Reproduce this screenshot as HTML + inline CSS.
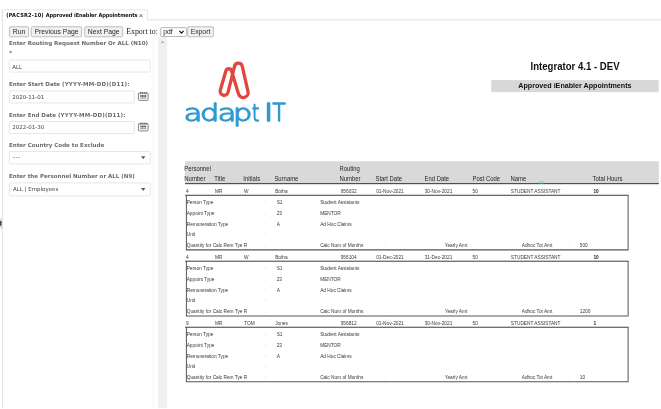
<!DOCTYPE html>
<html><head><meta charset="utf-8"><title>(PACSR2-10) Approved iEnabler Appointments</title>
<style>
html,body{margin:0;padding:0;background:#fff;overflow:hidden;}
body{width:661px;height:409px;position:relative;overflow:hidden;font-family:"Liberation Sans",sans-serif;}
#pg{position:absolute;left:0;top:0;width:661px;height:409px;will-change:transform;}
#pz{position:absolute;left:0;top:0;width:661px;height:409px;transform:translate(0.25px,0.25px) scale(1.0005);transform-origin:0 0;}
#bg{position:absolute;left:0;top:0;}
.t{position:absolute;white-space:nowrap;height:10px;line-height:10px;display:block;}
.r{position:absolute;display:block;}
</style></head><body><div id="pg"><div id="pz">
<svg id="bg" width="661" height="409" viewBox="0 0 661 409">
<g transform="translate(-0.25 -0.25)">
<rect x="2.0" y="9.5" width="0.70" height="398.50" fill="#dadada"/>
<path d="M2.35 21 V10.6 Q2.35 9.8 3.2 9.8 H146.5 Q147.3 9.8 147.3 10.6 V19.7" fill="none" stroke="#dedede" stroke-width="0.8" />
<rect x="147" y="18.9" width="514.00" height="1.70" fill="#ebebeb"/>
<rect x="0" y="218.2" width="2.20" height="10.20" fill="#d6dae3"/>
<rect x="-1" y="220.8" width="2.40" height="4.90" fill="#151515" rx="0.6"/>
<rect x="9.4" y="26.7" width="19.30" height="10.10" fill="#f0f0f0" stroke="#9a9a9a" stroke-width="0.6" rx="1.4"/>
<rect x="31.3" y="26.7" width="50.40" height="10.10" fill="#f0f0f0" stroke="#9a9a9a" stroke-width="0.6" rx="1.4"/>
<rect x="84.6" y="26.7" width="38.10" height="10.10" fill="#f0f0f0" stroke="#9a9a9a" stroke-width="0.6" rx="1.4"/>
<rect x="160.6" y="27.6" width="25.60" height="8.90" fill="#fff" stroke="#8a8a8a" stroke-width="0.6" rx="1.2"/>
<path d="M179.3 30.9 L181.4 33.1 L183.5 30.9" fill="none" stroke="#111" stroke-width="1.25" />
<rect x="187.5" y="26.7" width="25.80" height="10.10" fill="#f0f0f0" stroke="#9a9a9a" stroke-width="0.6" rx="1.4"/>
<rect x="153.4" y="37.5" width="0.70" height="370.50" fill="#f5f5f5"/>
<rect x="158.0" y="37.4" width="9.10" height="370.60" fill="#f0f0f0"/>
<path d="M160.9 42.9 L162.5 40.8 L164.1 42.9 Z" fill="#a6a6a6" stroke="none" stroke-width="0" />
<rect x="9.4" y="59.9" width="140.70" height="12.10" fill="#fff" stroke="#e0e0e0" stroke-width="0.8" rx="0.8"/>
<rect x="9.4" y="90.9" width="124.80" height="12.00" fill="#fff" stroke="#e0e0e0" stroke-width="0.8" rx="0.8"/>
<rect x="9.4" y="121.4" width="124.80" height="12.00" fill="#fff" stroke="#e0e0e0" stroke-width="0.8" rx="0.8"/>
<g transform="translate(137.9 92.0)"><rect x="0.45" y="0.85" width="9.7" height="7.5" rx="0.9" fill="#fff" stroke="#666" stroke-width="0.8"/><rect x="0.9" y="1.2" width="8.8" height="0.9" fill="#b5b5b5"/><g fill="#707070"><rect x="2.0" y="0.2" width="1.1" height="1.7"/><rect x="3.9" y="0.2" width="1.1" height="1.7"/><rect x="5.8" y="0.2" width="1.1" height="1.7"/><rect x="7.7" y="0.2" width="1.1" height="1.7"/></g><g fill="#4c4c4c"><rect x="2.3" y="3.1" width="1.3" height="1.7"/><rect x="3.85" y="3.1" width="1.3" height="1.7"/><rect x="5.4" y="3.1" width="1.3" height="1.7"/><rect x="6.95" y="3.1" width="1.3" height="1.7"/></g><g fill="#909090"><rect x="2.3" y="5.3" width="1.3" height="1.4"/><rect x="3.85" y="5.3" width="1.3" height="1.4"/><rect x="5.4" y="5.3" width="1.3" height="1.4"/><rect x="6.95" y="5.3" width="1.3" height="1.4"/></g></g>
<g transform="translate(137.9 122.5)"><rect x="0.45" y="0.85" width="9.7" height="7.5" rx="0.9" fill="#fff" stroke="#666" stroke-width="0.8"/><rect x="0.9" y="1.2" width="8.8" height="0.9" fill="#b5b5b5"/><g fill="#707070"><rect x="2.0" y="0.2" width="1.1" height="1.7"/><rect x="3.9" y="0.2" width="1.1" height="1.7"/><rect x="5.8" y="0.2" width="1.1" height="1.7"/><rect x="7.7" y="0.2" width="1.1" height="1.7"/></g><g fill="#4c4c4c"><rect x="2.3" y="3.1" width="1.3" height="1.7"/><rect x="3.85" y="3.1" width="1.3" height="1.7"/><rect x="5.4" y="3.1" width="1.3" height="1.7"/><rect x="6.95" y="3.1" width="1.3" height="1.7"/></g><g fill="#909090"><rect x="2.3" y="5.3" width="1.3" height="1.4"/><rect x="3.85" y="5.3" width="1.3" height="1.4"/><rect x="5.4" y="5.3" width="1.3" height="1.4"/><rect x="6.95" y="5.3" width="1.3" height="1.4"/></g></g>
<rect x="9.4" y="151.4" width="141.00" height="12.40" fill="#fff" stroke="#e0e0e0" stroke-width="0.8" rx="0.8"/>
<path d="M140.9 156.20 H145.3 L143.1 159.20 Z" fill="#5e5e5e" stroke="none" stroke-width="0" />
<rect x="9.4" y="182.8" width="141.00" height="13.00" fill="#fff" stroke="#e0e0e0" stroke-width="0.8" rx="0.8"/>
<path d="M140.9 187.90 H145.3 L143.1 190.90 Z" fill="#5e5e5e" stroke="none" stroke-width="0" />
<path d="M220.16 90.18 L225.82 70.79 A2.9 2.9 0 0 1 231.38 70.76 L238.41 94.02 A4.9 4.9 0 0 0 247.88 91.52 L242.10 66.04 A3.9 3.9 0 0 0 234.52 65.95 L227.88 92.28 A4.0 4.0 0 1 1 220.16 90.18 Z" fill="none" stroke="#e2463c" stroke-width="3.3" stroke-linejoin="round"/>
<g font-family="DejaVu Sans Light, DejaVu Sans, sans-serif" font-weight="200" fill="#2f9bd1" stroke="#2f9bd1" stroke-width="1.45" stroke-linejoin="round" stroke-linecap="round" transform="scale(1.3 1)"><text y="121.3" x="141.31 153.85 167.38 179.23" font-size="23.4" vector-effect="non-scaling-stroke" style="vector-effect:non-scaling-stroke;white-space:pre">adap<tspan x="193.69" textLength="5.6" lengthAdjust="spacingAndGlyphs">t</tspan> <tspan x="203.08" font-size="23.87">I</tspan><tspan x="209.46" font-size="23.87" textLength="10.1" lengthAdjust="spacingAndGlyphs">T</tspan></text></g>
<rect x="491" y="80.05" width="167.30" height="12.05" fill="#d8d8d8"/>
<rect x="185" y="161.2" width="473.50" height="22.00" fill="#d9d9d9"/>
<rect x="185" y="182.9" width="473.50" height="1.20" fill="#505050"/>
<rect x="538.3" y="180.6" width="5.4" height="3.2" rx="1.2" fill="#58d6cc" opacity="0.38"/>
<rect x="185" y="194.64999999999998" width="443.30" height="1.10" fill="#505050"/>
<path d="M186.3 195.2 V249.75 H627.8 V195.2" fill="none" stroke="#555" stroke-width="1.0" />
<rect x="185" y="260.55" width="443.30" height="1.10" fill="#505050"/>
<path d="M186.3 261.1 V315.75 H627.8 V261.1" fill="none" stroke="#555" stroke-width="1.0" />
<rect x="185" y="326.55" width="443.30" height="1.10" fill="#505050"/>
<path d="M186.3 327.1 V381.65 H627.8 V327.1" fill="none" stroke="#555" stroke-width="1.0" />
</g></svg>
<span class="t" style="left:5.95px;top:10.10px;font-size:5.58px;color:#111;font-family:'DejaVu Sans Condensed', 'DejaVu Sans', 'Liberation Sans', sans-serif;font-weight:bold;"><span style="letter-spacing:0.2px">(PACSR2-10)</span> <span style="letter-spacing:-0.07px">Approved iEnabler Appointments</span></span>
<span class="t" style="left:138.50px;top:10.85px;font-size:7.6px;color:#4a4a4a;font-family:'Liberation Sans', sans-serif;">&#215;</span>
<span class="t" style="left:8.85px;top:26.85px;font-size:6.8px;color:#2a2a2a;font-family:'Liberation Sans', sans-serif;width:19.9px;text-align:center;">Run</span>
<span class="t" style="left:30.75px;top:26.85px;font-size:6.8px;color:#2a2a2a;font-family:'Liberation Sans', sans-serif;width:51px;text-align:center;">Previous Page</span>
<span class="t" style="left:84.05px;top:26.85px;font-size:6.8px;color:#2a2a2a;font-family:'Liberation Sans', sans-serif;width:38.7px;text-align:center;">Next Page</span>
<span class="t" style="left:125.85px;top:27.05px;font-size:7.9px;color:#222;font-family:'Liberation Serif', serif;">Export to:</span>
<span class="t" style="left:162.95px;top:26.85px;font-size:6.8px;color:#222;font-family:'Liberation Sans', sans-serif;">pdf</span>
<span class="t" style="left:186.95px;top:26.85px;font-size:6.8px;color:#2a2a2a;font-family:'Liberation Sans', sans-serif;width:26.4px;text-align:center;">Export</span>
<span class="t" style="left:8.75px;top:38.15px;font-size:5.52px;color:#6a6a6a;font-family:'DejaVu Sans', 'Liberation Sans', sans-serif;font-weight:bold;">Enter Routing Request Number Or ALL (N10)</span>
<span class="t" style="left:9.05px;top:47.95px;font-size:5.5px;color:#6a6a6a;font-family:'DejaVu Sans', 'Liberation Sans', sans-serif;font-weight:bold;">*</span>
<span class="t" style="left:11.95px;top:60.80px;font-size:5.5px;color:#444;font-family:'DejaVu Sans', 'Liberation Sans', sans-serif;margin-top:0.9px;">ALL</span>
<span class="t" style="left:8.75px;top:78.65px;font-size:5.52px;color:#6a6a6a;font-family:'DejaVu Sans', 'Liberation Sans', sans-serif;font-weight:bold;">Enter Start Date <span style="letter-spacing:0.18px">(YYYY-MM-DD)(D11):</span></span>
<span class="t" style="left:11.95px;top:91.75px;font-size:5.5px;color:#444;font-family:'DejaVu Sans', 'Liberation Sans', sans-serif;">2020-11-01</span>
<span class="t" style="left:8.75px;top:109.85px;font-size:5.52px;color:#6a6a6a;font-family:'DejaVu Sans', 'Liberation Sans', sans-serif;font-weight:bold;">Enter End Date <span style="letter-spacing:0.18px">(YYYY-MM-DD)(D11):</span></span>
<span class="t" style="left:11.95px;top:122.25px;font-size:5.5px;color:#444;font-family:'DejaVu Sans', 'Liberation Sans', sans-serif;">2022-01-30</span>
<span class="t" style="left:8.75px;top:140.05px;font-size:5.52px;color:#6a6a6a;font-family:'DejaVu Sans', 'Liberation Sans', sans-serif;font-weight:bold;">Enter Country Code to Exclude</span>
<span class="t" style="left:12.75px;top:152.45px;font-size:5.5px;color:#444;font-family:'DejaVu Sans', 'Liberation Sans', sans-serif;letter-spacing:0.5px;">---</span>
<span class="t" style="left:8.75px;top:170.95px;font-size:5.52px;color:#6a6a6a;font-family:'DejaVu Sans', 'Liberation Sans', sans-serif;font-weight:bold;">Enter the Personnel Number or ALL (N9)</span>
<span class="t" style="left:12.75px;top:184.15px;font-size:5.5px;color:#444;font-family:'DejaVu Sans', 'Liberation Sans', sans-serif;">ALL | Employees</span>
<span class="t" style="left:490.75px;top:59.75px;font-size:10.1px;color:#111;font-family:'Liberation Sans', sans-serif;height:14px;line-height:14px;font-weight:bold;width:167px;text-align:center;transform:scaleX(0.95);transform-origin:50% 50%;">Integrator 4.1 - DEV</span>
<span class="t" style="left:490.75px;top:81.05px;font-size:7.15px;color:#111;font-family:'Liberation Sans', sans-serif;font-weight:bold;width:167.3px;text-align:center;">Approved iEnabler Appointments</span>
<span class="t" style="left:184.35px;top:163.75px;font-size:6.4px;color:#262626;font-family:'Liberation Sans', sans-serif;transform:scaleX(0.925);transform-origin:0 50%;">Personnel</span>
<span class="t" style="left:339.35px;top:163.75px;font-size:6.4px;color:#262626;font-family:'Liberation Sans', sans-serif;transform:scaleX(0.925);transform-origin:0 50%;">Routing</span>
<span class="t" style="left:184.35px;top:173.65px;font-size:6.4px;color:#262626;font-family:'Liberation Sans', sans-serif;transform:scaleX(0.925);transform-origin:0 50%;">Number</span>
<span class="t" style="left:214.25px;top:173.65px;font-size:6.4px;color:#262626;font-family:'Liberation Sans', sans-serif;transform:scaleX(0.925);transform-origin:0 50%;">Title</span>
<span class="t" style="left:243.35px;top:173.65px;font-size:6.4px;color:#262626;font-family:'Liberation Sans', sans-serif;transform:scaleX(0.925);transform-origin:0 50%;">Initials</span>
<span class="t" style="left:274.35px;top:173.65px;font-size:6.4px;color:#262626;font-family:'Liberation Sans', sans-serif;transform:scaleX(0.925);transform-origin:0 50%;">Surname</span>
<span class="t" style="left:339.35px;top:173.65px;font-size:6.4px;color:#262626;font-family:'Liberation Sans', sans-serif;transform:scaleX(0.925);transform-origin:0 50%;">Number</span>
<span class="t" style="left:375.35px;top:173.65px;font-size:6.4px;color:#262626;font-family:'Liberation Sans', sans-serif;transform:scaleX(0.925);transform-origin:0 50%;">Start Date</span>
<span class="t" style="left:423.85px;top:173.65px;font-size:6.4px;color:#262626;font-family:'Liberation Sans', sans-serif;transform:scaleX(0.925);transform-origin:0 50%;">End Date</span>
<span class="t" style="left:471.85px;top:173.65px;font-size:6.4px;color:#262626;font-family:'Liberation Sans', sans-serif;transform:scaleX(0.925);transform-origin:0 50%;">Post Code</span>
<span class="t" style="left:510.25px;top:173.65px;font-size:6.4px;color:#262626;font-family:'Liberation Sans', sans-serif;transform:scaleX(0.925);transform-origin:0 50%;">Name</span>
<span class="t" style="left:592.35px;top:173.65px;font-size:6.4px;color:#262626;font-family:'Liberation Sans', sans-serif;transform:scaleX(0.925);transform-origin:0 50%;">Total Hours</span>
<span class="t" style="left:185.75px;top:187.25px;font-size:4.78px;color:#383838;font-family:'Liberation Sans', sans-serif;">4</span>
<span class="t" style="left:214.75px;top:187.25px;font-size:4.78px;color:#383838;font-family:'Liberation Sans', sans-serif;">MR</span>
<span class="t" style="left:243.75px;top:187.25px;font-size:4.78px;color:#383838;font-family:'Liberation Sans', sans-serif;">W</span>
<span class="t" style="left:274.75px;top:187.25px;font-size:4.78px;color:#383838;font-family:'Liberation Sans', sans-serif;">Botha</span>
<span class="t" style="left:340.25px;top:187.25px;font-size:4.78px;color:#383838;font-family:'Liberation Sans', sans-serif;">956032</span>
<span class="t" style="left:375.75px;top:187.25px;font-size:4.78px;color:#383838;font-family:'Liberation Sans', sans-serif;">01-Nov-2021</span>
<span class="t" style="left:424.25px;top:187.25px;font-size:4.78px;color:#383838;font-family:'Liberation Sans', sans-serif;">30-Nov-2021</span>
<span class="t" style="left:472.05px;top:187.25px;font-size:4.78px;color:#383838;font-family:'Liberation Sans', sans-serif;">50</span>
<span class="t" style="left:510.35px;top:187.25px;font-size:4.78px;color:#383838;font-family:'Liberation Sans', sans-serif;">STUDENT ASSISTANT</span>
<span class="t" style="left:592.85px;top:187.25px;font-size:4.78px;color:#222;font-family:'Liberation Sans', sans-serif;font-weight:bold;">10</span>
<span class="t" style="left:186.35px;top:198.25px;font-size:4.78px;color:#383838;font-family:'Liberation Sans', sans-serif;">Person Type</span>
<span class="t" style="left:264.35px;top:198.25px;font-size:4.78px;color:#999;font-family:'Liberation Sans', sans-serif;">:</span>
<span class="t" style="left:276.25px;top:198.25px;font-size:4.78px;color:#383838;font-family:'Liberation Sans', sans-serif;">S1</span>
<span class="t" style="left:319.75px;top:198.25px;font-size:4.78px;color:#383838;font-family:'Liberation Sans', sans-serif;">Student Assistants</span>
<span class="t" style="left:186.35px;top:209.25px;font-size:4.78px;color:#383838;font-family:'Liberation Sans', sans-serif;">Appoint Type</span>
<span class="t" style="left:264.35px;top:209.25px;font-size:4.78px;color:#999;font-family:'Liberation Sans', sans-serif;">:</span>
<span class="t" style="left:276.25px;top:209.25px;font-size:4.78px;color:#383838;font-family:'Liberation Sans', sans-serif;">23</span>
<span class="t" style="left:319.75px;top:209.25px;font-size:4.78px;color:#383838;font-family:'Liberation Sans', sans-serif;">MENTOR</span>
<span class="t" style="left:186.35px;top:220.25px;font-size:4.78px;color:#383838;font-family:'Liberation Sans', sans-serif;">Remuneration Type</span>
<span class="t" style="left:264.35px;top:220.25px;font-size:4.78px;color:#999;font-family:'Liberation Sans', sans-serif;">:</span>
<span class="t" style="left:276.25px;top:220.25px;font-size:4.78px;color:#383838;font-family:'Liberation Sans', sans-serif;">A</span>
<span class="t" style="left:319.75px;top:220.25px;font-size:4.78px;color:#383838;font-family:'Liberation Sans', sans-serif;">Ad Hoc Claims</span>
<span class="t" style="left:186.35px;top:230.25px;font-size:4.78px;color:#383838;font-family:'Liberation Sans', sans-serif;">Unit</span>
<span class="t" style="left:264.35px;top:230.25px;font-size:4.78px;color:#999;font-family:'Liberation Sans', sans-serif;">:</span>
<span class="t" style="left:186.35px;top:241.25px;font-size:4.78px;color:#383838;font-family:'Liberation Sans', sans-serif;">Quantity for Calc Rem Tye R</span>
<span class="t" style="left:264.35px;top:241.25px;font-size:4.78px;color:#999;font-family:'Liberation Sans', sans-serif;">:</span>
<span class="t" style="left:319.75px;top:241.25px;font-size:4.78px;color:#383838;font-family:'Liberation Sans', sans-serif;">Calc Num of Months</span>
<span class="t" style="left:384.75px;top:241.25px;font-size:4.78px;color:#bbb;font-family:'Liberation Sans', sans-serif;">:</span>
<span class="t" style="left:444.25px;top:241.25px;font-size:4.78px;color:#383838;font-family:'Liberation Sans', sans-serif;">Yearly Amt</span>
<span class="t" style="left:521.25px;top:241.25px;font-size:4.78px;color:#383838;font-family:'Liberation Sans', sans-serif;">Adhoc Tot Amt</span>
<span class="t" style="left:568.75px;top:241.25px;font-size:4.78px;color:#bbb;font-family:'Liberation Sans', sans-serif;">:</span>
<span class="t" style="left:579.25px;top:241.25px;font-size:4.78px;color:#383838;font-family:'Liberation Sans', sans-serif;">500</span>
<span class="t" style="left:185.75px;top:253.25px;font-size:4.78px;color:#383838;font-family:'Liberation Sans', sans-serif;">4</span>
<span class="t" style="left:214.75px;top:253.25px;font-size:4.78px;color:#383838;font-family:'Liberation Sans', sans-serif;">MR</span>
<span class="t" style="left:243.75px;top:253.25px;font-size:4.78px;color:#383838;font-family:'Liberation Sans', sans-serif;">W</span>
<span class="t" style="left:274.75px;top:253.25px;font-size:4.78px;color:#383838;font-family:'Liberation Sans', sans-serif;">Botha</span>
<span class="t" style="left:340.25px;top:253.25px;font-size:4.78px;color:#383838;font-family:'Liberation Sans', sans-serif;">956104</span>
<span class="t" style="left:375.75px;top:253.25px;font-size:4.78px;color:#383838;font-family:'Liberation Sans', sans-serif;">01-Dec-2021</span>
<span class="t" style="left:424.25px;top:253.25px;font-size:4.78px;color:#383838;font-family:'Liberation Sans', sans-serif;">31-Dec-2021</span>
<span class="t" style="left:472.05px;top:253.25px;font-size:4.78px;color:#383838;font-family:'Liberation Sans', sans-serif;">50</span>
<span class="t" style="left:510.35px;top:253.25px;font-size:4.78px;color:#383838;font-family:'Liberation Sans', sans-serif;">STUDENT ASSISTANT</span>
<span class="t" style="left:592.85px;top:253.25px;font-size:4.78px;color:#222;font-family:'Liberation Sans', sans-serif;font-weight:bold;">10</span>
<span class="t" style="left:186.35px;top:264.25px;font-size:4.78px;color:#383838;font-family:'Liberation Sans', sans-serif;">Person Type</span>
<span class="t" style="left:264.35px;top:264.25px;font-size:4.78px;color:#999;font-family:'Liberation Sans', sans-serif;">:</span>
<span class="t" style="left:276.25px;top:264.25px;font-size:4.78px;color:#383838;font-family:'Liberation Sans', sans-serif;">S1</span>
<span class="t" style="left:319.75px;top:264.25px;font-size:4.78px;color:#383838;font-family:'Liberation Sans', sans-serif;">Student Assistants</span>
<span class="t" style="left:186.35px;top:275.25px;font-size:4.78px;color:#383838;font-family:'Liberation Sans', sans-serif;">Appoint Type</span>
<span class="t" style="left:264.35px;top:275.25px;font-size:4.78px;color:#999;font-family:'Liberation Sans', sans-serif;">:</span>
<span class="t" style="left:276.25px;top:275.25px;font-size:4.78px;color:#383838;font-family:'Liberation Sans', sans-serif;">23</span>
<span class="t" style="left:319.75px;top:275.25px;font-size:4.78px;color:#383838;font-family:'Liberation Sans', sans-serif;">MENTOR</span>
<span class="t" style="left:186.35px;top:286.25px;font-size:4.78px;color:#383838;font-family:'Liberation Sans', sans-serif;">Remuneration Type</span>
<span class="t" style="left:264.35px;top:286.25px;font-size:4.78px;color:#999;font-family:'Liberation Sans', sans-serif;">:</span>
<span class="t" style="left:276.25px;top:286.25px;font-size:4.78px;color:#383838;font-family:'Liberation Sans', sans-serif;">A</span>
<span class="t" style="left:319.75px;top:286.25px;font-size:4.78px;color:#383838;font-family:'Liberation Sans', sans-serif;">Ad Hoc Claims</span>
<span class="t" style="left:186.35px;top:296.25px;font-size:4.78px;color:#383838;font-family:'Liberation Sans', sans-serif;">Unit</span>
<span class="t" style="left:264.35px;top:296.25px;font-size:4.78px;color:#999;font-family:'Liberation Sans', sans-serif;">:</span>
<span class="t" style="left:186.35px;top:307.25px;font-size:4.78px;color:#383838;font-family:'Liberation Sans', sans-serif;">Quantity for Calc Rem Tye R</span>
<span class="t" style="left:264.35px;top:307.25px;font-size:4.78px;color:#999;font-family:'Liberation Sans', sans-serif;">:</span>
<span class="t" style="left:319.75px;top:307.25px;font-size:4.78px;color:#383838;font-family:'Liberation Sans', sans-serif;">Calc Num of Months</span>
<span class="t" style="left:384.75px;top:307.25px;font-size:4.78px;color:#bbb;font-family:'Liberation Sans', sans-serif;">:</span>
<span class="t" style="left:444.25px;top:307.25px;font-size:4.78px;color:#383838;font-family:'Liberation Sans', sans-serif;">Yearly Amt</span>
<span class="t" style="left:521.25px;top:307.25px;font-size:4.78px;color:#383838;font-family:'Liberation Sans', sans-serif;">Adhoc Tot Amt</span>
<span class="t" style="left:568.75px;top:307.25px;font-size:4.78px;color:#bbb;font-family:'Liberation Sans', sans-serif;">:</span>
<span class="t" style="left:579.25px;top:307.25px;font-size:4.78px;color:#383838;font-family:'Liberation Sans', sans-serif;">1200</span>
<span class="t" style="left:185.75px;top:319.25px;font-size:4.78px;color:#383838;font-family:'Liberation Sans', sans-serif;">9</span>
<span class="t" style="left:214.75px;top:319.25px;font-size:4.78px;color:#383838;font-family:'Liberation Sans', sans-serif;">MR</span>
<span class="t" style="left:243.75px;top:319.25px;font-size:4.78px;color:#383838;font-family:'Liberation Sans', sans-serif;">TOM</span>
<span class="t" style="left:274.75px;top:319.25px;font-size:4.78px;color:#383838;font-family:'Liberation Sans', sans-serif;">Jones</span>
<span class="t" style="left:340.25px;top:319.25px;font-size:4.78px;color:#383838;font-family:'Liberation Sans', sans-serif;">956812</span>
<span class="t" style="left:375.75px;top:319.25px;font-size:4.78px;color:#383838;font-family:'Liberation Sans', sans-serif;">01-Nov-2021</span>
<span class="t" style="left:424.25px;top:319.25px;font-size:4.78px;color:#383838;font-family:'Liberation Sans', sans-serif;">30-Nov-2021</span>
<span class="t" style="left:472.05px;top:319.25px;font-size:4.78px;color:#383838;font-family:'Liberation Sans', sans-serif;">50</span>
<span class="t" style="left:510.35px;top:319.25px;font-size:4.78px;color:#383838;font-family:'Liberation Sans', sans-serif;">STUDENT ASSISTANT</span>
<span class="t" style="left:592.85px;top:319.25px;font-size:4.78px;color:#222;font-family:'Liberation Sans', sans-serif;font-weight:bold;">1</span>
<span class="t" style="left:186.35px;top:330.25px;font-size:4.78px;color:#383838;font-family:'Liberation Sans', sans-serif;">Person Type</span>
<span class="t" style="left:264.35px;top:330.25px;font-size:4.78px;color:#999;font-family:'Liberation Sans', sans-serif;">:</span>
<span class="t" style="left:276.25px;top:330.25px;font-size:4.78px;color:#383838;font-family:'Liberation Sans', sans-serif;">S1</span>
<span class="t" style="left:319.75px;top:330.25px;font-size:4.78px;color:#383838;font-family:'Liberation Sans', sans-serif;">Student Assistants</span>
<span class="t" style="left:186.35px;top:341.25px;font-size:4.78px;color:#383838;font-family:'Liberation Sans', sans-serif;">Appoint Type</span>
<span class="t" style="left:264.35px;top:341.25px;font-size:4.78px;color:#999;font-family:'Liberation Sans', sans-serif;">:</span>
<span class="t" style="left:276.25px;top:341.25px;font-size:4.78px;color:#383838;font-family:'Liberation Sans', sans-serif;">23</span>
<span class="t" style="left:319.75px;top:341.25px;font-size:4.78px;color:#383838;font-family:'Liberation Sans', sans-serif;">MENTOR</span>
<span class="t" style="left:186.35px;top:352.25px;font-size:4.78px;color:#383838;font-family:'Liberation Sans', sans-serif;">Remuneration Type</span>
<span class="t" style="left:264.35px;top:352.25px;font-size:4.78px;color:#999;font-family:'Liberation Sans', sans-serif;">:</span>
<span class="t" style="left:276.25px;top:352.25px;font-size:4.78px;color:#383838;font-family:'Liberation Sans', sans-serif;">A</span>
<span class="t" style="left:319.75px;top:352.25px;font-size:4.78px;color:#383838;font-family:'Liberation Sans', sans-serif;">Ad Hoc Claims</span>
<span class="t" style="left:186.35px;top:362.25px;font-size:4.78px;color:#383838;font-family:'Liberation Sans', sans-serif;">Unit</span>
<span class="t" style="left:264.35px;top:362.25px;font-size:4.78px;color:#999;font-family:'Liberation Sans', sans-serif;">:</span>
<span class="t" style="left:186.35px;top:373.25px;font-size:4.78px;color:#383838;font-family:'Liberation Sans', sans-serif;">Quantity for Calc Rem Tye R</span>
<span class="t" style="left:264.35px;top:373.25px;font-size:4.78px;color:#999;font-family:'Liberation Sans', sans-serif;">:</span>
<span class="t" style="left:319.75px;top:373.25px;font-size:4.78px;color:#383838;font-family:'Liberation Sans', sans-serif;">Calc Num of Months</span>
<span class="t" style="left:384.75px;top:373.25px;font-size:4.78px;color:#bbb;font-family:'Liberation Sans', sans-serif;">:</span>
<span class="t" style="left:444.25px;top:373.25px;font-size:4.78px;color:#383838;font-family:'Liberation Sans', sans-serif;">Yearly Amt</span>
<span class="t" style="left:521.25px;top:373.25px;font-size:4.78px;color:#383838;font-family:'Liberation Sans', sans-serif;">Adhoc Tot Amt</span>
<span class="t" style="left:568.75px;top:373.25px;font-size:4.78px;color:#bbb;font-family:'Liberation Sans', sans-serif;">:</span>
<span class="t" style="left:579.25px;top:373.25px;font-size:4.78px;color:#383838;font-family:'Liberation Sans', sans-serif;">10</span>
</div></div></body></html>
